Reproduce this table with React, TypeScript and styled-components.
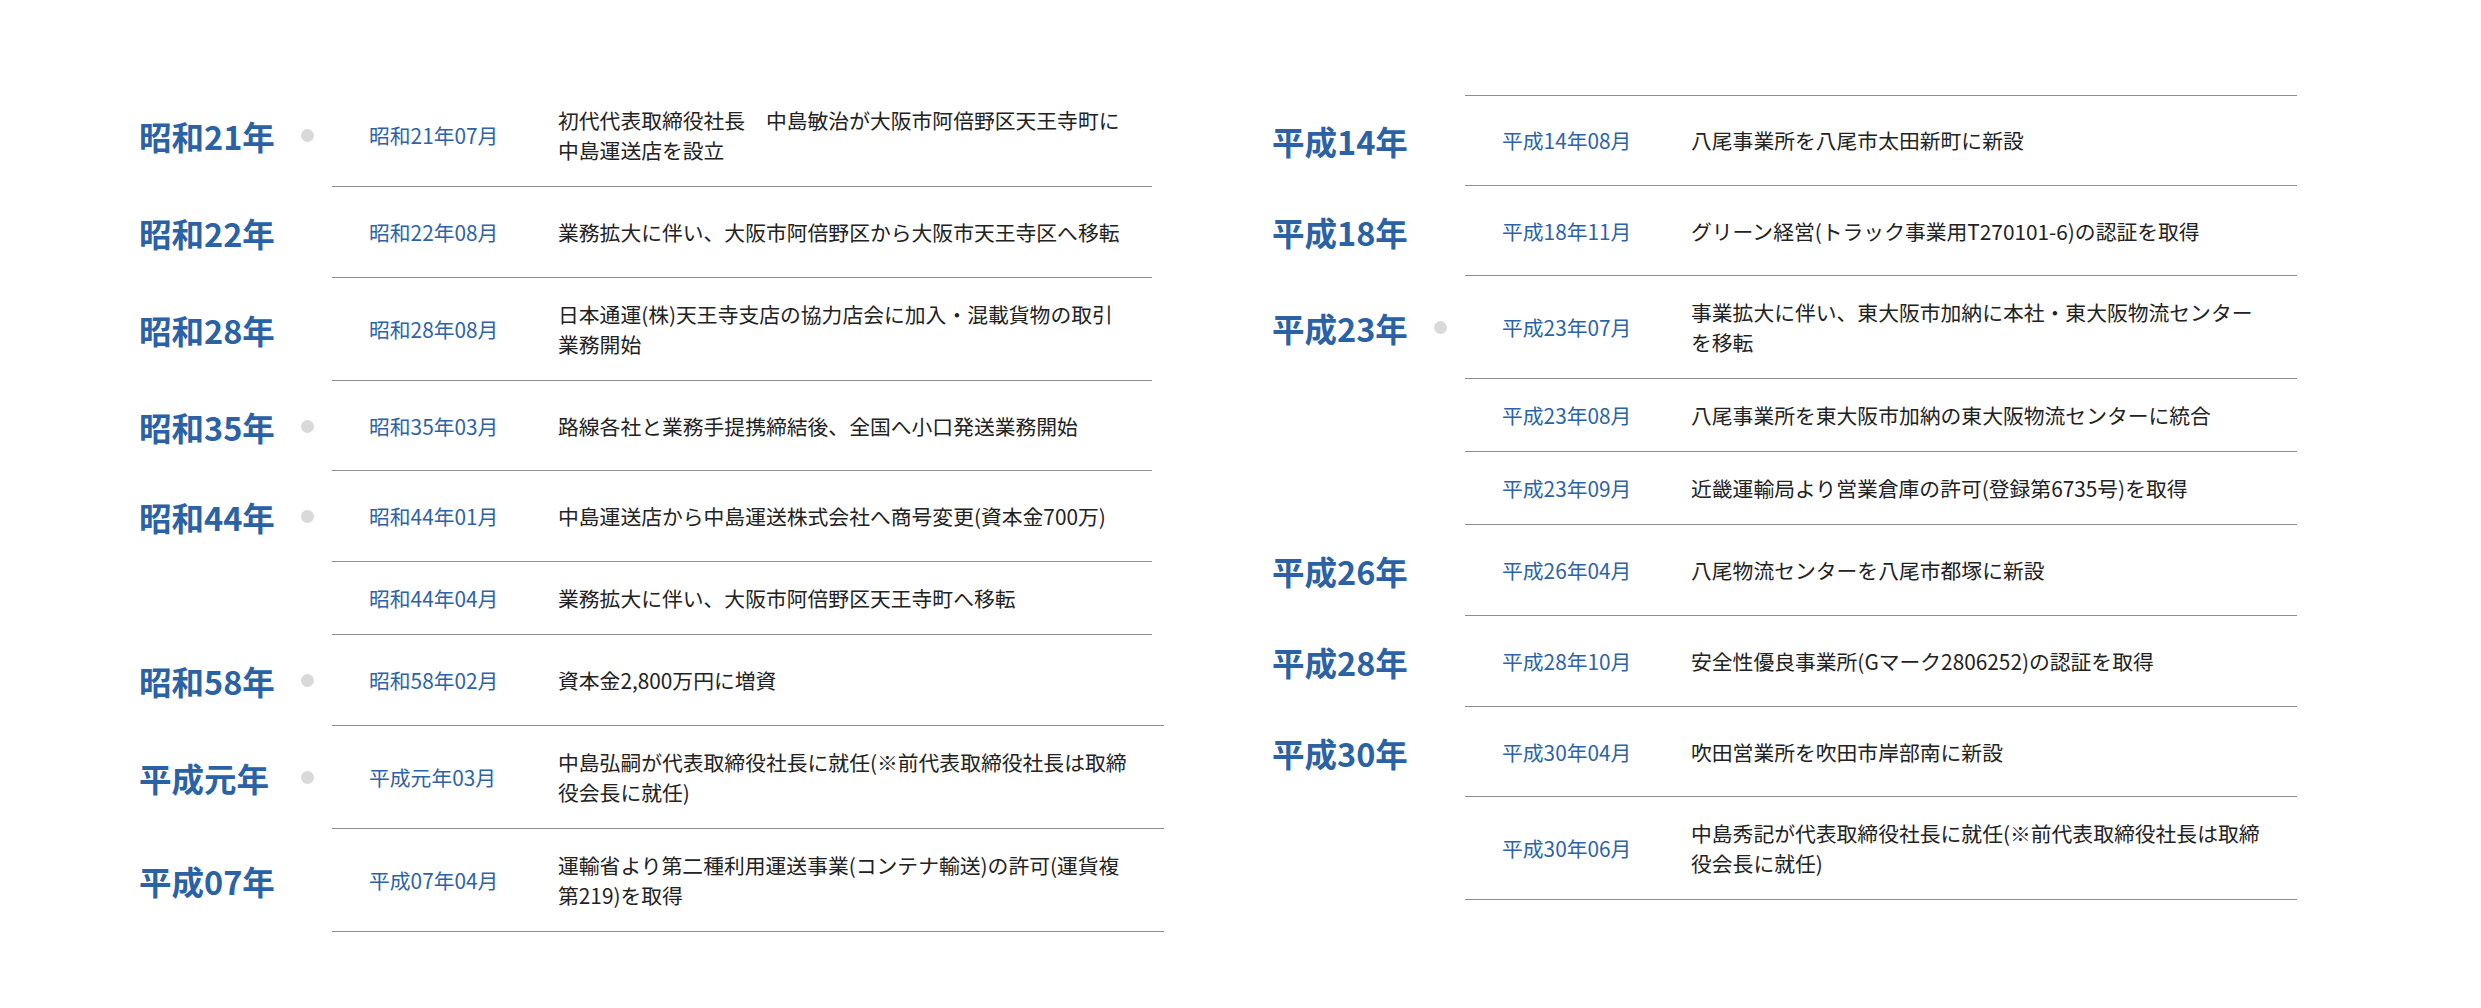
import React from "react";
import styled, { createGlobalStyle } from "styled-components";

const GlobalStyle = createGlobalStyle`
  html, body {
    margin: 0;
    padding: 0;
    background: #ffffff;
  }
  body {
    font-family: "Noto Sans CJK JP", "Noto Sans", sans-serif;
    color: #222222;
  }
`;

type Item = {
  year?: string;
  dot?: boolean;
  date: string;
  lines: string[];
  wide?: boolean;
};

const leftItems: Item[] = [
  {
    year: "昭和21年",
    dot: true,
    date: "昭和21年07月",
    lines: ["初代代表取締役社長　中島敏治が大阪市阿倍野区天王寺町に", "中島運送店を設立"],
  },
  { year: "昭和22年", date: "昭和22年08月", lines: ["業務拡大に伴い、大阪市阿倍野区から大阪市天王寺区へ移転"] },
  {
    year: "昭和28年",
    date: "昭和28年08月",
    lines: ["日本通運(株)天王寺支店の協力店会に加入・混載貨物の取引", "業務開始"],
  },
  { year: "昭和35年", dot: true, date: "昭和35年03月", lines: ["路線各社と業務手提携締結後、全国へ小口発送業務開始"] },
  { year: "昭和44年", dot: true, date: "昭和44年01月", lines: ["中島運送店から中島運送株式会社へ商号変更(資本金700万)"] },
  { date: "昭和44年04月", lines: ["業務拡大に伴い、大阪市阿倍野区天王寺町へ移転"] },
  { year: "昭和58年", dot: true, date: "昭和58年02月", lines: ["資本金2,800万円に増資"], wide: true },
  {
    year: "平成元年",
    dot: true,
    date: "平成元年03月",
    lines: ["中島弘嗣が代表取締役社長に就任(※前代表取締役社長は取締", "役会長に就任)"],
    wide: true,
  },
  {
    year: "平成07年",
    date: "平成07年04月",
    lines: ["運輸省より第二種利用運送事業(コンテナ輸送)の許可(運貨複", "第219)を取得"],
    wide: true,
  },
];

const rightItems: Item[] = [
  { year: "平成14年", date: "平成14年08月", lines: ["八尾事業所を八尾市太田新町に新設"] },
  { year: "平成18年", date: "平成18年11月", lines: ["グリーン経営(トラック事業用T270101-6)の認証を取得"] },
  {
    year: "平成23年",
    dot: true,
    date: "平成23年07月",
    lines: ["事業拡大に伴い、東大阪市加納に本社・東大阪物流センター", "を移転"],
  },
  { date: "平成23年08月", lines: ["八尾事業所を東大阪市加納の東大阪物流センターに統合"] },
  { date: "平成23年09月", lines: ["近畿運輸局より営業倉庫の許可(登録第6735号)を取得"] },
  { year: "平成26年", date: "平成26年04月", lines: ["八尾物流センターを八尾市都塚に新設"] },
  { year: "平成28年", date: "平成28年10月", lines: ["安全性優良事業所(Gマーク2806252)の認証を取得"] },
  { year: "平成30年", date: "平成30年04月", lines: ["吹田営業所を吹田市岸部南に新設"] },
  {
    date: "平成30年06月",
    lines: ["中島秀記が代表取締役社長に就任(※前代表取締役社長は取締", "役会長に就任)"],
  },
];

const Page = styled.div`
  display: flex;
  align-items: flex-start;
  gap: 107px;
  padding: 84px 0 60px 139px;
  width: 2481px;
  box-sizing: border-box;
`;

const Column = styled.div<{ $offset: number }>`
  display: flex;
  flex-direction: column;
  width: 1026px;
  margin-top: ${(p) => p.$offset}px;
`;

const Row = styled.div`
  display: flex;
  align-items: stretch;
`;

const YearCell = styled.div<{ $filled: boolean }>`
  flex: none;
  width: 193px;
  min-height: ${(p) => (p.$filled ? "90.7px" : "0")};
  box-sizing: border-box;
  padding-right: 18px;
  display: flex;
  align-items: center;
  justify-content: space-between;
`;

const Year = styled.span`
  font-size: 32.5px;
  font-weight: 700;
  line-height: 47px;
  color: #2b62a5;
  white-space: nowrap;
`;

const Dot = styled.span`
  width: 13px;
  height: 13px;
  border-radius: 50%;
  background: #d9d9d9;
  flex: none;
`;

const Entry = styled.div<{ $wide: boolean; $top: boolean }>`
  flex: none;
  width: ${(p) => (p.$wide ? 832 : 820)}px;
  box-sizing: border-box;
  display: flex;
  align-items: center;
  padding: 21px 0 21px 37px;
  border-bottom: 1px solid #8e8e8e;
  border-top: ${(p) => (p.$top ? "1px solid #8e8e8e" : "none")};
`;

const DateText = styled.div`
  flex: none;
  width: 189px;
  font-size: 20.8px;
  line-height: 30px;
  color: #2d63a6;
  white-space: nowrap;
`;

const Desc = styled.div`
  font-size: 20.8px;
  line-height: 30px;
  color: #222222;
  white-space: nowrap;
`;

function Timeline({
  items,
  offset,
  ruled,
  allWide,
}: {
  items: Item[];
  offset: number;
  ruled: boolean;
  allWide?: boolean;
}) {
  return (
    <Column $offset={offset}>
      {items.map((it, i) => (
        <Row key={it.date}>
          <YearCell $filled={!!it.year}>
            {it.year ? <Year>{it.year}</Year> : <span />}
            {it.dot ? <Dot /> : null}
          </YearCell>
          <Entry $wide={!!it.wide || !!allWide} $top={ruled && i === 0}>
            <DateText>{it.date}</DateText>
            <Desc>
              {it.lines.map((l, j) => (
                <React.Fragment key={j}>
                  {j > 0 ? <br /> : null}
                  {l}
                </React.Fragment>
              ))}
            </Desc>
          </Entry>
        </Row>
      ))}
    </Column>
  );
}

export default function App() {
  return (
    <>
      <GlobalStyle />
      <Page>
        <Timeline items={leftItems} offset={0} ruled={false} />
        <Timeline items={rightItems} offset={11} ruled={true} allWide />
      </Page>
    </>
  );
}
